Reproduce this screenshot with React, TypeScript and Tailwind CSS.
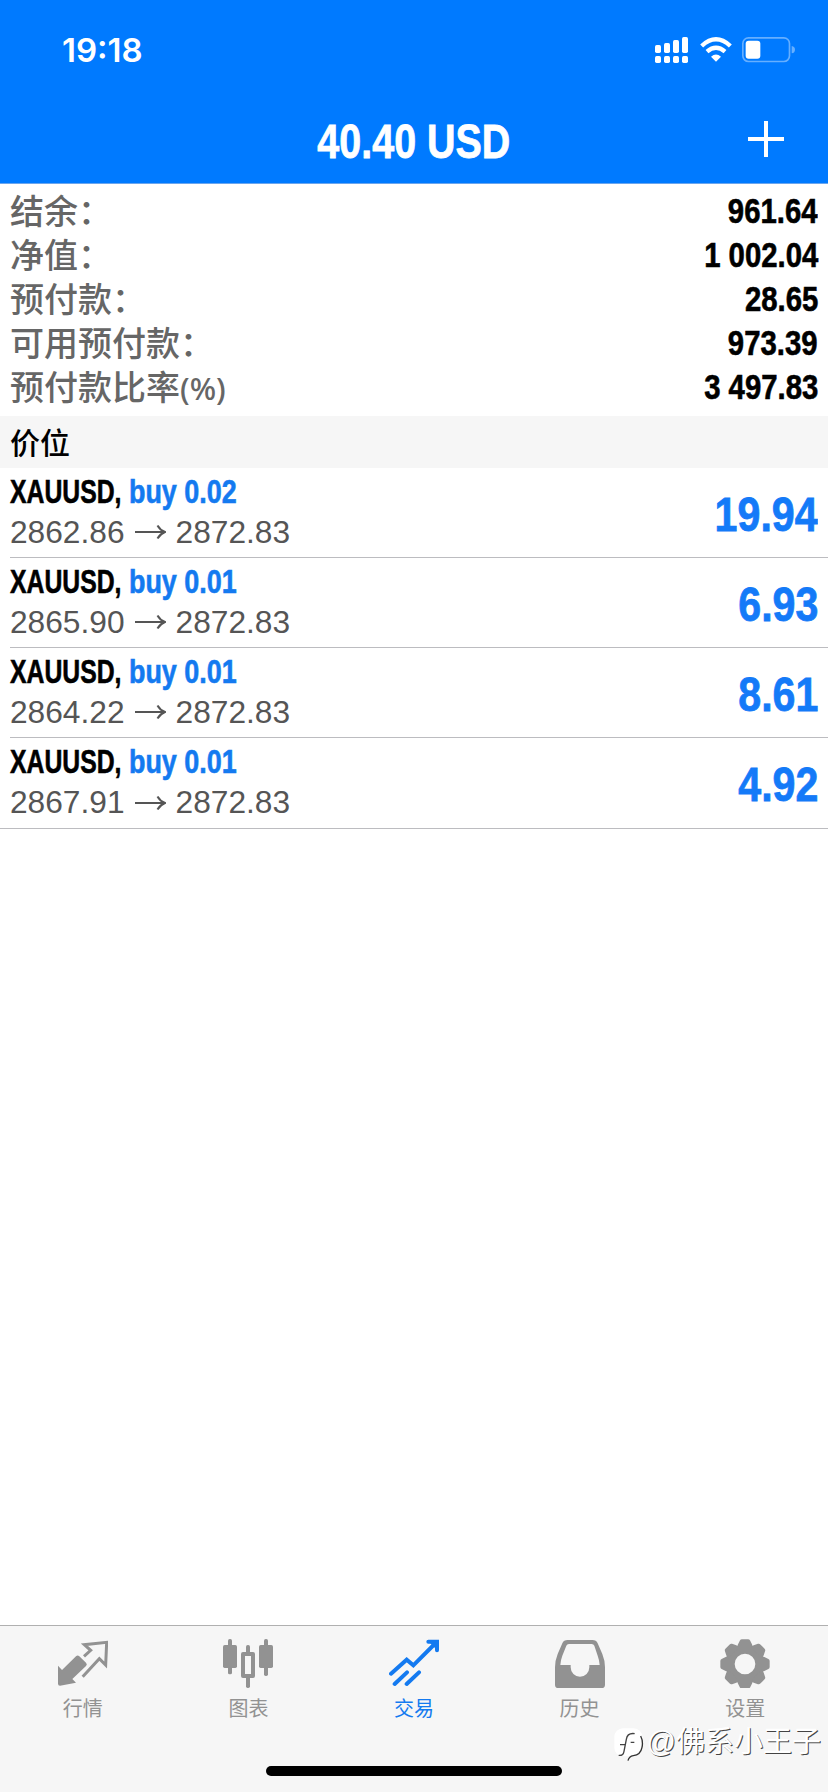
import type { ReactNode } from 'react'

const summary = [
  { label: '结余：', value: '961.64' },
  { label: '净值：', value: '1 002.04' },
  { label: '预付款：', value: '28.65' },
  { label: '可用预付款：', value: '973.39' },
  { label: '预付款比率', unit: '(%)', value: '3 497.83' },
]

const positions = [
  { symbol: 'XAUUSD', side: 'buy 0.02', open: '2862.86', current: '2872.83', profit: '19.94' },
  { symbol: 'XAUUSD', side: 'buy 0.01', open: '2865.90', current: '2872.83', profit: '6.93' },
  { symbol: 'XAUUSD', side: 'buy 0.01', open: '2864.22', current: '2872.83', profit: '8.61' },
  { symbol: 'XAUUSD', side: 'buy 0.01', open: '2867.91', current: '2872.83', profit: '4.92' },
]

function TabIcon({ children }: { children: ReactNode }) {
  return (
    <svg viewBox="0 0 150 150" className="w-[50px] h-[50px]" fill="currentColor">
      {children}
    </svg>
  )
}

function QuotesIcon() {
  return (
    <TabIcon>
      <path d="M0 83L12 96L54 55Q59 50 64 55L84 74Q89 79 84 84L43 123L54 134L6 143Q0 143 0 137Z" />
      <path
        d="M78 55L98 37L79 20L146 13L143 81L124 62L74 116"
        fill="none"
        stroke="currentColor"
        strokeWidth="9"
      />
    </TabIcon>
  )
}

function ChartIcon() {
  return (
    <TabIcon>
      <rect x="0" y="21" width="42" height="69" rx="5" />
      <rect x="15" y="3" width="12" height="106" rx="5" />
      <path d="M60 48H90V114H60Z" fill="none" stroke="currentColor" strokeWidth="12" strokeLinejoin="round" />
      <rect x="69" y="21" width="12" height="26" rx="5" />
      <rect x="69" y="114" width="12" height="36" rx="5" />
      <rect x="108" y="21" width="42" height="69" rx="5" />
      <rect x="123" y="3" width="12" height="111" rx="5" />
    </TabIcon>
  )
}

function TradeIcon() {
  return (
    <TabIcon>
      <path
        d="M6 107L53 65L73 82L140 15M118 11H144V37M17 138L54 103M53 138L90 103"
        fill="none"
        stroke="currentColor"
        strokeWidth="12"
        strokeLinecap="round"
      />
      <path d="M120 12H144V36Z" />
    </TabIcon>
  )
}

function HistoryIcon() {
  return (
    <TabIcon>
      <path
        fillRule="evenodd"
        d="M38 6H112Q124 6 128 16L142 48Q150 68 150 88V140Q150 150 140 150H10Q0 150 0 140V88Q0 68 8 48L22 16Q26 6 38 6ZM42 18Q36 18 34 23L22 53Q17 66 16 81H47V88A28 28 0 0 0 103 88V81H134Q133 66 128 53L118 23Q116 18 110 18Z"
      />
    </TabIcon>
  )
}

function SettingsIcon() {
  return (
    <TabIcon>
      <g transform="translate(75 78)">
        <circle r="45" fill="none" stroke="currentColor" strokeWidth="28" />
        {[0, 45, 90, 135, 180, 225, 270, 315].map((angle) => (
          <path
            key={angle}
            d="M-15 -55L-9 -67H9L15 -55Z"
            stroke="currentColor"
            strokeWidth="14"
            strokeLinejoin="round"
            transform={`rotate(${angle})`}
          />
        ))}
      </g>
    </TabIcon>
  )
}

const tabs = [
  { label: '行情', icon: <QuotesIcon /> },
  { label: '图表', icon: <ChartIcon /> },
  { label: '交易', icon: <TradeIcon />, active: true },
  { label: '历史', icon: <HistoryIcon /> },
  { label: '设置', icon: <SettingsIcon /> },
]

function StatusIcons() {
  return (
    <div className="flex items-center">
      {/* signal */}
      <svg viewBox="0 0 99 78" className="w-[33px] h-[26px]" fill="#fff">
        <rect x="0" y="24" width="18" height="24" rx="5" />
        <rect x="27" y="18" width="18" height="30" rx="5" />
        <rect x="54" y="9" width="18" height="39" rx="5" />
        <rect x="81" y="0" width="18" height="48" rx="5" />
        <rect x="0" y="57" width="18" height="21" rx="5" />
        <rect x="27" y="57" width="18" height="21" rx="5" />
        <rect x="54" y="57" width="18" height="21" rx="5" />
        <rect x="81" y="57" width="18" height="21" rx="5" />
      </svg>
      {/* wifi */}
      <svg viewBox="0 0 96 78" className="ml-3 w-8 h-[26px]" fill="none" stroke="#fff" strokeWidth="13">
        <path d="M5 27Q48 -13 91 27" />
        <path d="M21 44Q48 21 75 44" />
        <path d="M33 59Q48 46 63 59L48 74Z" fill="#fff" stroke="none" />
      </svg>
      {/* battery */}
      <svg viewBox="0 0 162 78" className="ml-2.5 w-[54px] h-[26px]">
        <rect x="2.5" y="2.5" width="140" height="71" rx="17" fill="none" stroke="#fff" strokeOpacity="0.4" strokeWidth="5" />
        <rect x="11" y="11" width="44" height="54" rx="9" fill="#fff" />
        <path d="M149 27Q159 29 159 38Q159 47 149 49Z" fill="#fff" fillOpacity="0.4" />
      </svg>
    </div>
  )
}

export default function App() {
  return (
    <div className="relative flex flex-col w-[828px] h-[1792px] overflow-hidden bg-white font-['Liberation_Sans','Noto_Sans_CJK_SC',sans-serif]">
      {/* ヘッダー */}
      <header className="h-[184px] shrink-0 bg-[#007aff] border-b border-[#6ba6ee] text-white">
        <div className="flex h-[100px] items-center justify-between pl-[62px] pr-[32px]">
          <span className="font-['Inter',sans-serif] text-[33px] font-semibold leading-none">19:18</span>
          <StatusIcons />
        </div>
        <div className="grid h-[82px] grid-cols-[1fr_auto_1fr] items-center px-11">
          <span />
          <h1 className="scale-x-[0.805] text-[49px] font-bold leading-none [-webkit-text-stroke:0.8px_currentColor]">
            40.40 USD
          </h1>
          <svg viewBox="0 0 36 36" className="mb-1 w-9 h-9 justify-self-end" stroke="#fff" strokeWidth="4">
            <path d="M18 0V36M0 18H36" />
          </svg>
        </div>
      </header>

      {/* 口座情報 */}
      <dl className="h-[232px] shrink-0 pt-[5px] px-2.5">
        {summary.map((row) => (
          <div key={row.label} className="flex h-11 items-center justify-between">
            <dt className="pt-px text-[34px] font-medium leading-none text-[#666]">
              {row.label}
              {row.unit && (
                <span className="font-['Noto_Sans',sans-serif] text-[31px] leading-none">{row.unit}</span>
              )}
            </dt>
            <dd className="origin-right scale-x-[0.85] text-[34.5px] font-bold leading-none text-black [-webkit-text-stroke:0.6px_currentColor]">
              {row.value}
            </dd>
          </div>
        ))}
      </dl>

      <h2 className="flex h-[52px] shrink-0 items-center bg-[#f6f6f6] px-2.5 pb-0.5 font-['Noto_Sans_CJK_SC',sans-serif] text-[30px] font-medium leading-none text-black">
        价位
      </h2>

      {/* ポジション一覧 */}
      <ul className="flex-1 min-h-0">
        {positions.map((item, index) => (
          <li key={index} className="last:border-b last:border-[#bcbcc0]">
            <div
              className={`ml-2.5 flex h-[90px] items-center justify-between pr-2.5 ${
                index < positions.length - 1 ? 'border-b border-[#bcbcc0]' : ''
              }`}
            >
              <div className="pb-0.5">
                <p className="flex text-[33px] font-bold leading-[41px] whitespace-nowrap [-webkit-text-stroke:0.6px_currentColor]">
                  <span className="w-[119px]">
                    <span className="inline-block origin-left scale-x-[0.75] text-black">{item.symbol},</span>
                  </span>
                  <span className="origin-left scale-x-[0.815] text-[#147af0]">{item.side}</span>
                </p>
                <p className="flex items-center text-[31.7px] leading-[41px] text-[#555]">
                  {item.open}
                  <svg viewBox="0 0 31 16" className="mx-2.5 w-[31px] h-4" fill="none" stroke="currentColor" strokeWidth="2">
                    <path d="M0 8H29M22.500 1.500Q25 6 30 8Q25 10 22.500 14.500" />
                  </svg>
                  {item.current}
                </p>
              </div>
              <span className="origin-right scale-x-[0.84] pt-[3px] text-[49px] font-bold leading-none text-[#147af8] [-webkit-text-stroke:0.8px_currentColor]">
                {item.profit}
              </span>
            </div>
          </li>
        ))}
      </ul>

      {/* タブバー */}
      <nav className="flex h-[167px] shrink-0 flex-col items-center justify-between border-t border-[#b0b0b0] bg-[#f6f6f6] pt-3 pb-4">
        <div className="grid w-full grid-cols-5">
          {tabs.map((tab) => (
            <button
              key={tab.label}
              className={`flex flex-col items-center ${tab.active ? 'text-[#147af0]' : 'text-[#929292]'}`}
            >
              {tab.icon}
              <span className="mt-[11px] text-[20px] leading-none">{tab.label}</span>
            </button>
          ))}
        </div>
        <div className="w-[296px] h-2.5 rounded-full bg-black" />
      </nav>

      <div className="absolute right-[7px] bottom-[30px] flex items-start text-white">
        <svg viewBox="0 0 90 102" className="w-[30px] h-[34px]">
          <rect x="1" y="1" width="84" height="84" rx="26" fill="#fff" />
          <path d="M18 50H34M62 17Q40 14 37 34L30 70Q28 84 14 82M50 43H61" fill="none" stroke="#444" strokeWidth="4" />
          <path d="M80 24Q88 40 84 58Q80 80 58 83Q45 85 42 98" fill="none" stroke="#333" strokeWidth="4" />
        </svg>
        <span className="ml-[3px] text-[29px] leading-none [text-shadow:1px_1px_0_#444]">@佛系小王子</span>
      </div>
    </div>
  )
}
